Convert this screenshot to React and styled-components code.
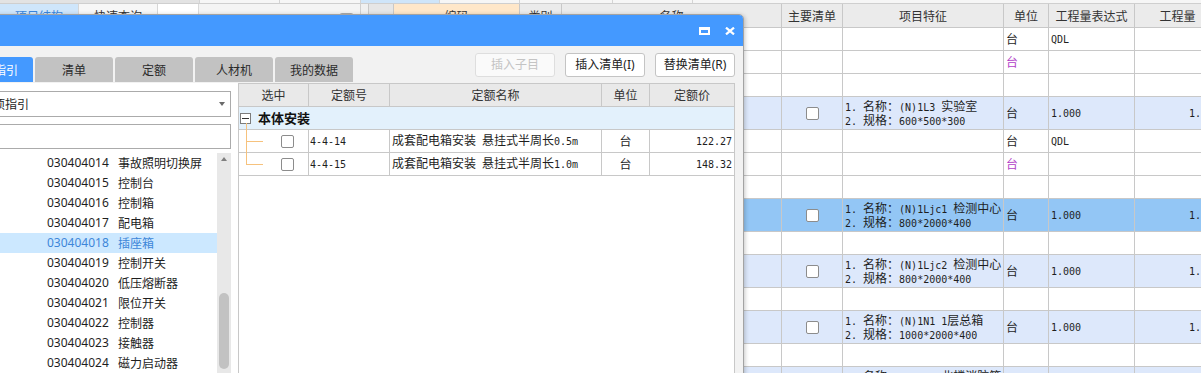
import React from "react";
import styled, { createGlobalStyle } from "styled-components";

const SANS = `"Noto Sans", "Noto Sans CJK SC", sans-serif`;
const CJK = `"Noto Sans CJK SC", "Noto Sans", sans-serif`;
const MONO = `"DejaVu Sans Mono", "Liberation Mono", "Noto Sans CJK SC", monospace`;
const LINE = "#c8c8c8";

const GlobalStyle = createGlobalStyle`
  html, body { margin: 0; padding: 0; background: #fff; overflow: hidden; }
  body { width: 1201px; height: 373px; font-family: ${SANS}; font-size: 12px; color: #1e1e1e; }
  *, *::before, *::after { box-sizing: border-box; }
`;

/* ---------- mixed SimSun-like text: half-width runs mono, CJK runs sans ---------- */
const MixedWrap = styled.span`
  line-height: inherit;
  white-space: nowrap;
`;
const HalfRun = styled.span`
  font-family: ${MONO};
  font-size: 10px;
  white-space: pre;
`;
const FullRun = styled.span`
  font-family: ${CJK};
  font-size: 12px;
`;
const CJK_RE = /[\u2e80-\u9fff\uff00-\uffef]/;
function Mixed({ text }) {
  if (!text) return null;
  const parts =
    text.match(/[\u2e80-\u9fff\uff00-\uffef]+|[^\u2e80-\u9fff\uff00-\uffef]+/g) || [];
  return (
    <MixedWrap>
      {parts.map((p, i) =>
        CJK_RE.test(p) ? <FullRun key={i}>{p}</FullRun> : <HalfRun key={i}>{p}</HalfRun>
      )}
    </MixedWrap>
  );
}

/* ---------- screen ---------- */
const Screen = styled.div`
  position: relative;
  width: 1201px;
  height: 373px;
  overflow: hidden;
  background: #fff;
`;

const TopStrip = styled.div`
  display: flex;
  height: 4px;
  border-bottom: 1px solid #cfcfcf;
  background: #f6f6f6;
`;
const TopCell = styled.div`
  flex: 0 0 ${(p) => p.$w}px;
  background: ${(p) => p.$bg};
  border-right: 1px solid #d4d4d4;
`;

const Main = styled.div`
  display: flex;
  height: 369px;
`;

/* left navigation pane (behind dialog) */
const NavPane = styled.div`
  flex: 0 0 361px;
  border-right: 1px solid #cfcfcf;
  background: #fff;
`;
const NavHeader = styled.div`
  display: flex;
  height: 24px;
  border-bottom: 1px solid ${LINE};
`;
const NavTab = styled.div`
  flex: 0 0 79px;
  display: flex;
  align-items: center;
  justify-content: center;
  border-right: 1px solid #d6d6d6;
  background: ${(p) => (p.$active ? "#cfe6fb" : "#f7f7f7")};
  color: ${(p) => (p.$active ? "#3a86de" : "#333")};
  font-family: ${CJK};
  line-height: 16px;
`;
const NavGap = styled.div`
  flex: 0 0 41px;
  border-right: 1px solid #dadada;
`;
const NavSearch = styled.div`
  flex: 1;
  background: #f4f4f4;
  padding: 9px 0 0 140px;
`;
const NavToggle = styled.div`
  width: 15px;
  height: 14px;
  border: 1px solid #ababab;
  border-radius: 3px;
  background: #fff;
`;
const Splitter = styled.div`
  flex: 0 0 7px;
  background: #f0f0f0;
`;

/* main grid */
const GRID_COLS = "25px 126px 42px 220px 61px 161px 45px 86px 86px";
const TONES = { plain: "#ffffff", light: "#dde8fb", sel: "#93c6f5" };

const Grid = styled.div`
  flex: 0 0 854px;
  border-left: 1px solid ${LINE};
`;
const GridRow = styled.div`
  display: grid;
  grid-template-columns: ${GRID_COLS};
  height: ${(p) => p.$h}px;
  background: ${(p) => TONES[p.$tone || "plain"]};
`;
const GridCell = styled.div`
  display: flex;
  align-items: center;
  justify-content: ${(p) =>
    p.$align === "center" ? "center" : p.$align === "right" ? "flex-end" : "flex-start"};
  padding: 0 ${(p) => (p.$align === "right" ? "1px" : "0")} 0 ${(p) => (p.$align === "left" ? "2px" : "0")};
  border-right: 1px solid ${LINE};
  border-bottom: 1px solid ${LINE};
  overflow: hidden;
  white-space: nowrap;
  min-width: 0;
  line-height: 16px;
`;
const HeadCell = styled(GridCell)`
  justify-content: center;
  background: ${(p) => p.$bg || "#ebebeb"};
  color: #333;
  font-family: ${CJK};
`;
const UnitText = styled.span`
  font-family: ${CJK};
  color: ${(p) => (p.$purple ? "#b23ec8" : "#1e1e1e")};
`;
const FeatureLines = styled.div`
  display: flex;
  flex-direction: column;
`;
const FeatureLine = styled.div`
  height: 14px;
  line-height: 14px;
`;
const CheckBox = styled.span`
  display: block;
  width: 13px;
  height: 13px;
  border: 1px solid #8c8c8c;
  border-radius: 2px;
  background: #fff;
`;

/* ---------- dialog ---------- */
const Dialog = styled.div`
  position: absolute;
  left: -50px;
  top: 14px;
  width: 794px;
  height: 420px;
  display: flex;
  flex-direction: column;
  background: #f2f2f2;
  border: 1px solid #a3a3a3;
  border-radius: 5px 5px 0 0;
  box-shadow: 1px 1px 4px rgba(0, 0, 0, 0.22);
  overflow: hidden;
`;
const TitleBar = styled.div`
  flex: 0 0 31px;
  display: flex;
  align-items: center;
  justify-content: flex-end;
  gap: 15px;
  padding-right: 8px;
  background: #4499ff;
`;
const TitleIcon = styled.svg`
  display: block;
`;
const DialogBody = styled.div`
  flex: 1;
  display: flex;
  flex-direction: column;
  padding: 0 8px 0 4px;
  min-height: 0;
`;
const Toolbar = styled.div`
  flex: 0 0 37px;
  display: flex;
  align-items: flex-end;
`;
const Tabs = styled.div`
  display: flex;
  gap: 2px;
  margin-bottom: 1px;
`;
const Tab = styled.div`
  width: 78px;
  height: 25px;
  display: flex;
  align-items: center;
  justify-content: center;
  border-radius: 3px 3px 0 0;
  background: ${(p) => (p.$active ? "#4499ff" : "#c2c2c2")};
  color: ${(p) => (p.$active ? "#fff" : "#2b2b2b")};
  font-family: ${CJK};
  line-height: 16px;
`;
const Actions = styled.div`
  margin-left: auto;
  align-self: flex-start;
  margin-top: 7px;
  display: flex;
  gap: 10px;
`;
const ActionButton = styled.button`
  width: 80px;
  height: 24px;
  padding: 0;
  border: 1px solid ${(p) => (p.disabled ? "#dedede" : "#c4c4c4")};
  border-radius: 3px;
  background: ${(p) => (p.disabled ? "#fafafa" : "#fff")};
  color: ${(p) => (p.disabled ? "#c4c4c4" : "#222")};
  font-family: ${SANS};
  font-size: 12px;
  line-height: 16px;
`;
const Content = styled.div`
  flex: 1;
  display: flex;
  background: #fff;
  min-height: 0;
`;

/* left guide panel */
const GuidePanel = styled.div`
  flex: 0 0 283px;
  display: flex;
  flex-direction: column;
  padding: 8px 7px 0 10px;
  min-height: 0;
`;
const Select = styled.div`
  flex: 0 0 26px;
  display: flex;
  align-items: center;
  padding: 0 5px 0 3px;
  border: 1px solid #ababab;
  background: #fff;
`;
const SelectText = styled.span`
  flex: 1;
  font-family: ${CJK};
  line-height: 16px;
  white-space: nowrap;
`;
const Caret = styled.span`
  width: 0;
  height: 0;
  border-left: 3.5px solid transparent;
  border-right: 3.5px solid transparent;
  border-top: 4px solid #6a6a6a;
`;
const SearchBox = styled.div`
  flex: 0 0 25px;
  margin-top: 7px;
  border: 1px solid #ababab;
  background: #fff;
`;
const ListArea = styled.div`
  flex: 1;
  margin-top: 4px;
  display: flex;
  min-height: 0;
`;
const GuideList = styled.div`
  flex: 1;
  overflow: hidden;
`;
const GuideItem = styled.div`
  height: 20px;
  display: flex;
  align-items: center;
  padding-left: 82px;
  background: ${(p) => (p.$selected ? "#cce8ff" : "transparent")};
  color: ${(p) => (p.$selected ? "#3d86d9" : "#1e1e1e")};
  line-height: 16px;
  white-space: nowrap;
`;
const ItemCode = styled.span`
  flex: 0 0 71px;
  font-family: ${SANS};
`;
const ItemName = styled.span`
  font-family: ${CJK};
`;
const ScrollTrack = styled.div`
  flex: 0 0 14px;
  display: flex;
  flex-direction: column;
  align-items: center;
  background: #e8e8e8;
`;
const ScrollUp = styled.div`
  flex: 0 0 14px;
  padding-top: 4px;
  &::after {
    content: "";
    display: block;
    width: 0;
    height: 0;
    border-left: 3.5px solid transparent;
    border-right: 3.5px solid transparent;
    border-bottom: 4px solid #7f7f7f;
  }
`;
const ScrollThumb = styled.div`
  margin-top: 126px;
  width: 10px;
  height: 76px;
  border-radius: 5px;
  background: #c2c2c2;
`;

/* right quota table */
const Q_COLS = "70px 81px 212px 48px 84px";
const QuotaPane = styled.div`
  flex: 1;
  display: flex;
  flex-direction: column;
  border: 1px solid ${LINE};
  border-bottom: none;
  background: #fff;
  min-width: 0;
`;
const QRow = styled.div`
  display: grid;
  grid-template-columns: ${Q_COLS};
  height: 23px;
  background: ${(p) => p.$bg || "#fff"};
`;
const QCell = styled.div`
  position: relative;
  display: flex;
  align-items: center;
  justify-content: ${(p) =>
    p.$align === "center" ? "center" : p.$align === "right" ? "flex-end" : "flex-start"};
  padding: ${(p) => p.$pad || "0"};
  border-right: 1px solid ${LINE};
  border-bottom: 1px solid ${LINE};
  white-space: nowrap;
  overflow: hidden;
  font-family: ${CJK};
  line-height: 16px;
  &:last-child {
    border-right: none;
  }
`;
const QHead = styled(QCell)`
  justify-content: center;
  color: #333;
`;
const TREE = "#f6c27d";
const TreeCell = styled(QCell)`
  padding-left: 42px;
  overflow: visible;
  &::before {
    content: "";
    position: absolute;
    left: 7px;
    top: 0;
    height: ${(p) => (p.$last ? "50%" : "calc(100% + 1px)")};
    border-left: 1px solid ${TREE};
  }
  &::after {
    content: "";
    position: absolute;
    left: 7px;
    top: 50%;
    width: 17px;
    border-top: 1px solid ${TREE};
  }
`;
const GroupRow = styled.div`
  height: 23px;
  display: flex;
  align-items: center;
  padding-left: 1px;
  background: #e3f1fc;
  border-bottom: 1px solid ${LINE};
`;
const MinusBox = styled.span`
  position: relative;
  width: 11px;
  height: 11px;
  border: 1px solid #7c7c7c;
  background: #fff;
  &::before {
    content: "";
    position: absolute;
    left: 1px;
    right: 1px;
    top: 4px;
    height: 1px;
    background: #333;
  }
  &::after {
    content: "";
    position: absolute;
    left: 5px;
    top: 100%;
    height: 8px;
    border-left: 1px solid ${TREE};
  }
`;
const GroupLabel = styled.span`
  margin-left: 7px;
  font-family: ${CJK};
  font-weight: 700;
  font-size: 13px;
  line-height: 16px;
  color: #111;
`;

/* ---------- data ---------- */
const TOP_CELLS = [
  { w: 200, bg: "#e3e3e3" },
  { w: 80, bg: "#f6f6f6" },
  { w: 81, bg: "#f6f6f6" },
  { w: 79, bg: "#cfe5f9" },
  { w: 80, bg: "#f6f6f6" },
  { w: 93, bg: "#f6f6f6" },
  { w: 80, bg: "#f6f6f6" },
];

const GRID_HEAD = [
  { t: "", bg: "#e6e6e6" },
  { t: "编码", bg: "#ffe7c9" },
  { t: "类别" },
  { t: "名称" },
  { t: "主要清单" },
  { t: "项目特征" },
  { t: "单位" },
  { t: "工程量表达式" },
  { t: "工程量" },
];

const GRID_ROWS = [
  { h: 23, unit: "台", expr: "QDL" },
  { h: 23, unit: "台", purple: true },
  { h: 23 },
  {
    h: 33,
    tone: "light",
    check: true,
    feat: ["1. 名称：(N)1L3 实验室", "2. 规格：600*500*300"],
    unit: "台",
    expr: "1.000",
    qty: "1.000",
  },
  { h: 23, unit: "台", expr: "QDL" },
  { h: 23, unit: "台", purple: true },
  { h: 23 },
  {
    h: 33,
    tone: "sel",
    check: true,
    feat: ["1. 名称：(N)1Ljc1 检测中心", "2. 规格：800*2000*400"],
    unit: "台",
    expr: "1.000",
    qty: "1.000",
  },
  { h: 23 },
  {
    h: 33,
    tone: "light",
    check: true,
    feat: ["1. 名称：(N)1Ljc2 检测中心", "2. 规格：800*2000*400"],
    unit: "台",
    expr: "1.000",
    qty: "1.000",
  },
  { h: 23 },
  {
    h: 33,
    tone: "light",
    check: true,
    feat: ["1. 名称：(N)1N1 1层总箱", "2. 规格：1000*2000*400"],
    unit: "台",
    expr: "1.000",
    qty: "1.000",
  },
  { h: 23 },
  {
    h: 33,
    tone: "light",
    check: true,
    feat: ["1. 名称：(N)1N2 北楼消防箱", "2. 规格：800*1800*400"],
    unit: "台",
    expr: "1.000",
    qty: "1.000",
  },
];

const TABS = [
  { label: "清单指引", active: true },
  { label: "清单" },
  { label: "定额" },
  { label: "人材机" },
  { label: "我的数据" },
];

const GUIDE_ITEMS = [
  ["030404014", "事故照明切换屏"],
  ["030404015", "控制台"],
  ["030404016", "控制箱"],
  ["030404017", "配电箱"],
  ["030404018", "插座箱"],
  ["030404019", "控制开关"],
  ["030404020", "低压熔断器"],
  ["030404021", "限位开关"],
  ["030404022", "控制器"],
  ["030404023", "接触器"],
  ["030404024", "磁力启动器"],
];

const QUOTA_HEAD = ["选中", "定额号", "定额名称", "单位", "定额价"];
const QUOTA_ROWS = [
  { code: "4-4-14", name: "成套配电箱安装 悬挂式半周长0.5m", unit: "台", price: "122.27" },
  { code: "4-4-15", name: "成套配电箱安装 悬挂式半周长1.0m", unit: "台", price: "148.32" },
];

export default function App() {
  return (
    <>
      <GlobalStyle />
      <Screen>
        <TopStrip>
          {TOP_CELLS.map((c, i) => (
            <TopCell key={i} $w={c.w} $bg={c.bg} />
          ))}
        </TopStrip>
        <Main>
          <NavPane>
            <NavHeader>
              <NavTab $active>项目结构</NavTab>
              <NavTab>快速查询</NavTab>
              <NavGap />
              <NavSearch>
                <NavToggle />
              </NavSearch>
            </NavHeader>
          </NavPane>
          <Splitter />
          <Grid>
            <GridRow $h={24}>
              {GRID_HEAD.map((h, i) => (
                <HeadCell key={i} $bg={h.bg}>
                  {h.t}
                </HeadCell>
              ))}
            </GridRow>
            {GRID_ROWS.map((r, i) => (
              <GridRow key={i} $h={r.h} $tone={r.tone}>
                <GridCell />
                <GridCell />
                <GridCell />
                <GridCell />
                <GridCell $align="center">{r.check && <CheckBox />}</GridCell>
                <GridCell $align="left">
                  {r.feat && (
                    <FeatureLines>
                      {r.feat.map((l, k) => (
                        <FeatureLine key={k}>
                          <Mixed text={l} />
                        </FeatureLine>
                      ))}
                    </FeatureLines>
                  )}
                </GridCell>
                <GridCell $align="left">
                  {r.unit && <UnitText $purple={r.purple}>{r.unit}</UnitText>}
                </GridCell>
                <GridCell $align="left">
                  <Mixed text={r.expr} />
                </GridCell>
                <GridCell $align="right">
                  <Mixed text={r.qty} />
                </GridCell>
              </GridRow>
            ))}
          </Grid>
        </Main>

        <Dialog>
          <TitleBar>
            <TitleIcon width="11" height="8" viewBox="0 0 11 8">
              <path d="M0 0H11V8H0Z M2 3H9V6H2Z" fill="#fff" fillRule="evenodd" />
            </TitleIcon>
            <TitleIcon width="10" height="8" viewBox="0 0 10 8">
              <path d="M1 0.6L9 7.4M9 0.6L1 7.4" stroke="#fff" strokeWidth="2.2" />
            </TitleIcon>
          </TitleBar>
          <DialogBody>
            <Toolbar>
              <Tabs>
                {TABS.map((t) => (
                  <Tab key={t.label} $active={t.active}>
                    {t.label}
                  </Tab>
                ))}
              </Tabs>
              <Actions>
                <ActionButton disabled>插入子目</ActionButton>
                <ActionButton>插入清单(I)</ActionButton>
                <ActionButton>替换清单(R)</ActionButton>
              </Actions>
            </Toolbar>
            <Content>
              <GuidePanel>
                <Select>
                  <SelectText>清单项指引</SelectText>
                  <Caret />
                </Select>
                <SearchBox />
                <ListArea>
                  <GuideList>
                    {GUIDE_ITEMS.map(([code, name], i) => (
                      <GuideItem key={code} $selected={i === 4}>
                        <ItemCode>{code}</ItemCode>
                        <ItemName>{name}</ItemName>
                      </GuideItem>
                    ))}
                  </GuideList>
                  <ScrollTrack>
                    <ScrollUp />
                    <ScrollThumb />
                  </ScrollTrack>
                </ListArea>
              </GuidePanel>
              <QuotaPane>
                <QRow $bg="#e9e9e9">
                  {QUOTA_HEAD.map((h) => (
                    <QHead key={h}>{h}</QHead>
                  ))}
                </QRow>
                <GroupRow>
                  <MinusBox />
                  <GroupLabel>本体安装</GroupLabel>
                </GroupRow>
                {QUOTA_ROWS.map((r, i) => (
                  <QRow key={r.code}>
                    <TreeCell $last={i === QUOTA_ROWS.length - 1}>
                      <CheckBox />
                    </TreeCell>
                    <QCell $pad="0 0 0 1px">
                      <Mixed text={r.code} />
                    </QCell>
                    <QCell $pad="0 0 0 2px">
                      <Mixed text={r.name} />
                    </QCell>
                    <QCell $align="center">{r.unit}</QCell>
                    <QCell $align="right" $pad="0 2px 0 0">
                      <Mixed text={r.price} />
                    </QCell>
                  </QRow>
                ))}
              </QuotaPane>
            </Content>
          </DialogBody>
        </Dialog>
      </Screen>
    </>
  );
}
